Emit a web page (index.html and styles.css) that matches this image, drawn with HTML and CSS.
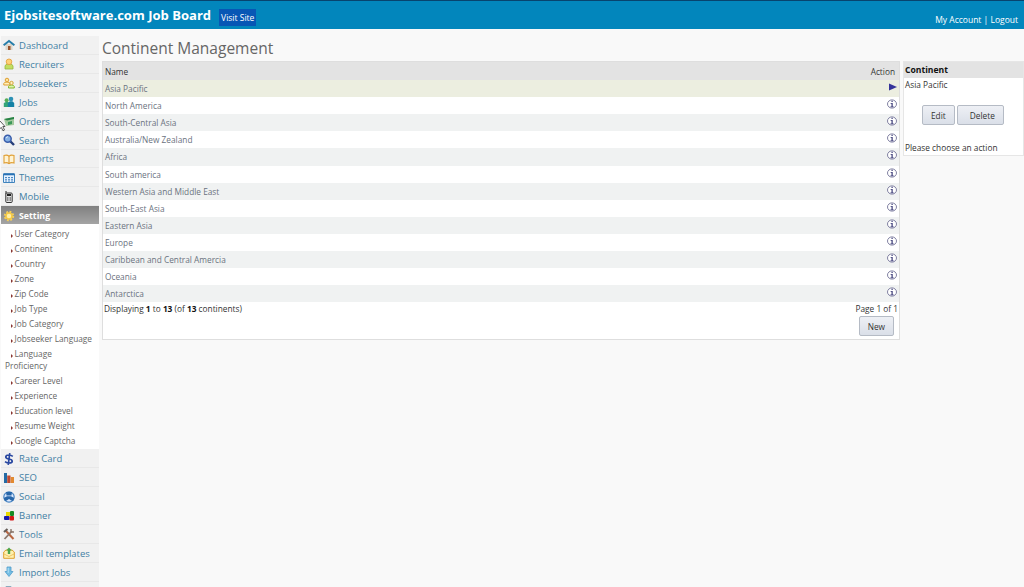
FILE: index.html
```html
<!DOCTYPE html>
<html lang="en">
  <head>
    <meta charset="utf-8">
    <title>Continent Management</title>
    <link rel="stylesheet" href="styles.css">
  </head>
  <body>
    <svg class="sprite" width="0" height="0">
      <symbol id="info" viewBox="0 0 10 10">
        <ellipse cx="5" cy="5" rx="4.5" ry="4.1" fill="#fff" stroke="#62628c" stroke-width=".8"/>
        <path d="M4.500 1.800h1.200v1.200H4.500zM3.600 4h2.100v3.500h1v.8H3.400v-.8h1.100V4.800h-.9z" fill="#3c3c78"/>
      </symbol>
    </svg>

    <header class="header">
      <h1 class="brand">Ejobsitesoftware.com Job Board</h1>
      <a class="visit" href="#">Visit Site</a>
      <div class="account"><a href="#">My Account</a> | <a href="#">Logout</a></div>
    </header>

    <div class="page">
      <nav class="sidebar">
        <a class="item" href="#"><svg viewBox="0 0 12 12"><path d="M2.5 5h7v6h-7z" fill="#ddd5c8"/><path d="M5 7h2.5v4H5z" fill="#9a532c"/><path d="M.6 6.2L6 2l5.4 4.2" fill="none" stroke="#287eaa" stroke-width="2"/></svg>Dashboard</a>
        <a class="item" href="#"><svg viewBox="0 0 12 12"><path d="M2 11V8q0-2 4-2t4 2v3z" fill="#c3de62" stroke="#94b83f" stroke-width=".8"/><circle cx="6" cy="3.8" r="2.8" fill="#ffd276" stroke="#e5a040" stroke-width=".9"/></svg>Recruiters</a>
        <a class="item" href="#"><svg viewBox="0 0 12 12"><path d="M.8 8V6.5Q1 5 4 5t3 2v1z" fill="#fff0bd" stroke="#dfa032"/><circle cx="4" cy="3" r="1.8" fill="#ffe29c" stroke="#dfa032"/><path d="M5.5 11V9.5Q6 8 8.5 8t2.8 1.5V11z" fill="#dff3ac" stroke="#85b92f"/><circle cx="8.5" cy="6" r="1.7" fill="#fff1be" stroke="#d5a43e"/></svg>Jobseekers</a>
        <a class="item" href="#"><svg viewBox="0 0 12 12"><circle cx="3.6" cy="4.2" r="2" fill="#58ad57"/><path d="M.8 11V7l3-1.6L7 7v4z" fill="#34a478"/><circle cx="8" cy="3" r="2.3" fill="#2d91b5"/><path d="M4.8 11V7l2-1.8h2.6L11.2 7v4z" fill="#1682a5"/></svg>Jobs</a>
        <a class="item" href="#"><svg viewBox="0 0 12 12"><path d="M1 4l10-2v8l-8 1z" fill="#a4c99f"/><path d="M1 4l10-2v2L4 5.5z" fill="#278345"/><path d="M5 7l4-1v3l-4 1z" fill="#3b9859"/></svg>Orders</a>
        <a class="item" href="#"><svg viewBox="0 0 12 12"><path d="M7 7l4 4" stroke="#263e79" stroke-width="2.4"/><circle cx="4.7" cy="4.7" r="3.5" fill="#83afe3" stroke="#395caa" stroke-width="1.5"/><path d="M3 4l2-1.5" stroke="#dbeaff"/></svg>Search</a>
        <a class="item" href="#"><svg viewBox="0 0 12 12"><path d="M1 2.5q3-1 5 .6 2-1.6 5-.6V10q-3-1-5 .6Q4 9 1 10z" fill="#fff4d4" stroke="#e1a036" stroke-width="1.1"/><path d="M6 3v7.5" stroke="#d88f21"/></svg>Reports</a>
        <a class="item" href="#"><svg viewBox="0 0 12 12"><path d="M.5 2h11v8.5H.5z" fill="#e6f2ff" stroke="#3f83bd"/><path d="M.5 2.3h11" stroke="#2871b4" stroke-width="2"/><path d="M2 5.5h8M2 7.3h8M2 9h8" stroke="#4c88c3" stroke-width="1" stroke-dasharray="2 1"/></svg>Themes</a>
        <a class="item" href="#"><svg viewBox="0 0 12 12"><path d="M3 0v3" stroke="#222"/><rect x="2.8" y="2" width="6.4" height="9.5" rx="1" fill="#e2e2e2" stroke="#333"/><path d="M4 4h4" stroke="#222" stroke-width="2"/><path d="M4 7h4M4 9h4" stroke="#333" stroke-dasharray="1 .5"/></svg>Mobile</a>
        <a class="item active" href="#"><svg viewBox="0 0 12 12"><circle cx="6" cy="6" r="4.2" fill="none" stroke="#f6cf59" stroke-width="2" stroke-dasharray="1.8 1.5"/><circle cx="6" cy="6" r="3" fill="#fff0a5" stroke="#f4c844" stroke-width="1.5"/></svg>Setting</a>

        <ul class="submenu">
          <li><a href="#">User Category</a></li>
          <li><a href="#">Continent</a></li>
          <li><a href="#">Country</a></li>
          <li><a href="#">Zone</a></li>
          <li><a href="#">Zip Code</a></li>
          <li><a href="#">Job Type</a></li>
          <li><a href="#">Job Category</a></li>
          <li><a href="#">Jobseeker Language</a></li>
          <li><a href="#">Language Proficiency</a></li>
          <li><a href="#">Career Level</a></li>
          <li><a href="#">Experience</a></li>
          <li><a href="#">Education level</a></li>
          <li><a href="#">Resume Weight</a></li>
          <li><a href="#">Google Captcha</a></li>
        </ul>

        <a class="item" href="#"><svg viewBox="0 0 12 12"><path d="M9.8 3.4Q8 2 6 2 2.8 2 2.8 4q0 1.5 3.2 2t3.2 2.2Q9.2 10 6 10 4 10 2 8.6M6.8.2L5.2 11.8" fill="none" stroke="#2746a0" stroke-width="1.7"/></svg>Rate Card</a>
        <a class="item" href="#"><svg viewBox="0 0 12 12"><path d="M1 1h3v10H1z" fill="#246ba4"/><path d="M4.2 3.5h3.300V11H4.200z" fill="#bd4a32"/><path d="M7.700 5H11v6H7.700z" fill="#e28a31"/></svg>SEO</a>
        <a class="item" href="#"><svg viewBox="0 0 12 12"><circle cx="6" cy="6" r="5.2" fill="#dceaff" stroke="#4a86c4" stroke-width="1.2"/><path d="M3 1h6L8.5 4.5h-5z" fill="#2867aa"/><path d="M.8 7L4 5.2h4L11.2 7l-1 3-2-.5L6 8 3.8 9.5l-2 .5z" fill="#2867aa"/></svg>Social</a>
        <a class="item" href="#"><svg viewBox="0 0 12 12"><path d="M3 2h4v4H3z" fill="#e9d900"/><rect x="7" y="1" width="4" height="5" rx="1" fill="#168b25"/><rect x="1" y="6" width="5.5" height="4" rx="1" fill="#171aaf"/><rect x="6.5" y="6" width="4.5" height="4.5" rx="1" fill="#d41818"/></svg>Banner</a>
        <a class="item" href="#"><svg viewBox="0 0 12 12"><path d="M2.5 2.5l8 8.5" stroke="#b86540" stroke-width="2"/><path d="M1 4l3.5-3" stroke="#665d58" stroke-width="2.2"/><path d="M9 3l-7.5 8" stroke="#8b776c" stroke-width="1.8"/><path d="M8 1v3h3" fill="none" stroke="#8b776c" stroke-width="1.4"/></svg>Tools</a>
        <a class="item" href="#"><svg viewBox="0 0 12 12"><path d="M.7 5L3 3h6l2.3 2v6.3H.7z" fill="#fff0ae" stroke="#dfa12c"/><path d="M1 7l5 2.5L11 7" fill="none" stroke="#e8b850" stroke-width=".8"/><path d="M6 .5l2.8 3H7.2V7H4.8V3.5H3.2z" fill="#4ca64a"/></svg>Email templates</a>
        <a class="item" href="#"><svg viewBox="0 0 12 12"><path d="M4 1h4v4.5h2L6 10.5 2 5.500h2z" fill="#74bee4" stroke="#529dca" stroke-width=".8"/><path d="M5.2 1.8v5" stroke="#b6e3f7"/></svg>Import Jobs</a>
        <a class="item" href="#"><svg viewBox="0 0 12 12"><path d="M3 1.500h5l2 2V11H3z" fill="#dce8ef" stroke="#8caabd"/></svg></a>
      </nav>

      <main class="main">
        <h2>Continent Management</h2>
        <div class="columns">
          <section class="listing">
            <div class="row head"><span>Name</span><span>Action</span></div>
            <div class="row selected"><span>Asia Pacific</span><svg class="arrow" viewBox="0 0 8 8"><path d="M0 .5L8 4 0 7.5z" fill="#35349a"/></svg></div>
            <div class="row"><span>North America</span><svg><use href="#info"/></svg></div>
            <div class="row"><span>South-Central Asia</span><svg><use href="#info"/></svg></div>
            <div class="row"><span>Australia/New Zealand</span><svg><use href="#info"/></svg></div>
            <div class="row"><span>Africa</span><svg><use href="#info"/></svg></div>
            <div class="row"><span>South america</span><svg><use href="#info"/></svg></div>
            <div class="row"><span>Western Asia and Middle East</span><svg><use href="#info"/></svg></div>
            <div class="row"><span>South-East Asia</span><svg><use href="#info"/></svg></div>
            <div class="row"><span>Eastern Asia</span><svg><use href="#info"/></svg></div>
            <div class="row"><span>Europe</span><svg><use href="#info"/></svg></div>
            <div class="row"><span>Caribbean and Central Amercia</span><svg><use href="#info"/></svg></div>
            <div class="row"><span>Oceania</span><svg><use href="#info"/></svg></div>
            <div class="row"><span>Antarctica</span><svg><use href="#info"/></svg></div>
            <div class="pager"><span>Displaying <b>1</b> to <b>13</b> (of <b>13</b> continents)</span><span>Page 1 of 1</span></div>
            <div class="tools"><button class="btn">New</button></div>
          </section>

          <aside class="details">
            <h3>Continent</h3>
            <p>Asia Pacific</p>
            <div class="buttons"><button class="btn">Edit</button><button class="btn delete">Delete</button></div>
            <p>Please choose an action</p>
          </aside>
        </div>
      </main>
    </div>

    <svg class="cursor" viewBox="0 0 6 12"><path d="M0 1l5 5.5H2.8L4.5 10l-1.5.8L1.4 7.5 0 8.5" fill="#fff" stroke="#333" stroke-width=".8"/></svg>
  </body>
</html>
```

FILE: styles.css
```css
* {
  box-sizing: border-box;
}

body {
  margin: 0;
  height: 587px;
  overflow: hidden;
  background: #f9f9f9;
  color: #333;
  font-family: "Open Sans", Arial, sans-serif;
  font-size: 8.3px;
}

a {
  color: inherit;
  text-decoration: none;
}

h1, h2, h3, p, ul {
  margin: 0;
  padding: 0;
}

.sprite {
  display: none;
}

.header {
  display: flex;
  height: 29px;
  padding-left: 4px;
  border-top: 1px solid #07446e;
  background: #0286bc;
  color: #fff;
  font-size: 8.5px;
}

.brand {
  font-size: 13.05px;
  line-height: 28px;
  font-weight: 700;
}

.visit {
  height: 17px;
  margin: 8px 0 0 8px;
  padding: 0 2px;
  background: #0757b5;
  line-height: 18px;
}

.account {
  margin: 12px 6px 0 auto;
  line-height: 14px;
}

.page {
  display: flex;
  padding-top: 7px;
}

.sidebar {
  flex: none;
  width: 98px;
  margin-left: 1px;
}

.item {
  display: flex;
  align-items: center;
  height: 18.93px;
  padding: 1px 0 0 2px;
  border-bottom: 1px solid #e8e8e8;
  background: #f1f1f1;
  color: #427fa4;
  font-size: 9.5px;
}

.item svg {
  width: 12px;
  height: 12px;
  margin-right: 4px;
}

.item.active {
  height: 18px;
  border: 0;
  background: linear-gradient(#808080, #a4a4a4);
  color: #fff;
  font-size: 8.8px;
  font-weight: 700;
}

.submenu {
  height: 225px;
  padding: 4px 4px 0 4px;
  background: #fff;
  list-style: none;
  color: #666;
  line-height: 12px;
}

.submenu li {
  margin-bottom: 3px;
}

.submenu li::before {
  content: '';
  display: inline-block;
  margin: 0 2px 0 5.5px;
  border-left: 2.5px solid #8a3732;
  border-top: 2px solid transparent;
  border-bottom: 2px solid transparent;
  vertical-align: -1px;
}

.main {
  flex: 1;
  padding: 0 1px 0 3px;
}

.main h2 {
  height: 25px;
  color: #666;
  font-size: 15.5px;
  line-height: 25px;
  font-weight: 400;
}

.columns {
  display: flex;
  align-items: flex-start;
  gap: 3px;
}

.listing {
  width: 798px;
  height: 279px;
  border: 1px solid #dedede;
  background: #fff;
}

.row {
  display: flex;
  align-items: center;
  justify-content: space-between;
  height: 17.12px;
  padding: 0 2px;
  color: #6b7280;
}

.row:nth-child(even) {
  background: #f0f2f2;
}

.row svg {
  width: 10px;
  height: 10px;
  margin-bottom: 3px;
}

.row .arrow {
  width: 8px;
  height: 8px;
}

.row.head {
  height: 18px;
  padding: 1px 4px 0 2px;
  background: #e3e3e3;
  color: #333;
}

.row.selected {
  background: #eceee0;
}

.pager {
  display: flex;
  justify-content: space-between;
  height: 13px;
  padding: 0 1px;
  line-height: 13px;
}

.pager b {
  color: #111;
}

.tools {
  display: flex;
  justify-content: flex-end;
  padding: 1px 5px 0 0;
}

.btn {
  height: 20px;
  padding: 0 8px;
  border: 1px solid #b5bbc5;
  border-radius: 2px;
  background: linear-gradient(#eef0f5, #dadfe8);
  color: #333;
  font: inherit;
}

.details {
  width: 121px;
  height: 95px;
  border: 1px solid #e6e6e6;
  background: #fff;
}

.details h3 {
  height: 16px;
  padding-left: 1px;
  background: #e3e3e3;
  color: #111;
  font-size: 8.6px;
  line-height: 16px;
}

.details p {
  padding-left: 1px;
  line-height: 14px;
}

.buttons {
  display: flex;
  gap: 2px;
  padding: 13px 0 16px 18px;
}

.btn.delete {
  padding-left: 12px;
}

.cursor {
  position: absolute;
  left: 0;
  top: 120px;
  width: 6px;
  height: 12px;
}
```
